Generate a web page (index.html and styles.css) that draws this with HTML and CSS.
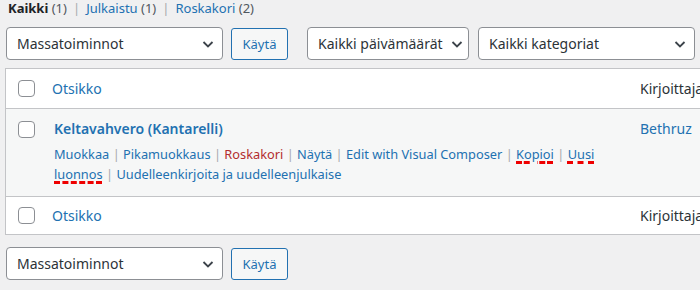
FILE: index.html
```html
<!DOCTYPE html>
<html lang="fi">
<head>
<meta charset="utf-8">
<link rel="stylesheet" href="styles.css">
</head>
<body>
<div class="page">
  <ul class="subsubsub">
    <li><span class="current">Kaikki</span> <span class="count">(1)</span></li>
    <li class="sep">|</li>
    <li><a href="#">Julkaistu <span class="count">(1)</span></a></li>
    <li class="sep">|</li>
    <li><a href="#">Roskakori <span class="count">(2)</span></a></li>
  </ul>

  <div class="tablenav top">
    <div class="select bulk"><span>Massatoiminnot</span><svg class="chev" width="14" height="14" viewBox="0 0 14 14"><path d="M2.5 5 L7 9.5 L11.5 5" fill="none" stroke="#3c434a" stroke-width="1.8"/></svg></div>
    <button class="button">Käytä</button>
    <div class="select dates"><span>Kaikki päivämäärät</span><svg class="chev" width="14" height="14" viewBox="0 0 14 14"><path d="M2.5 5 L7 9.5 L11.5 5" fill="none" stroke="#3c434a" stroke-width="1.8"/></svg></div>
    <div class="select cats"><span>Kaikki kategoriat</span><svg class="chev" width="14" height="14" viewBox="0 0 14 14"><path d="M2.5 5 L7 9.5 L11.5 5" fill="none" stroke="#3c434a" stroke-width="1.8"/></svg></div>
  </div>

  <div class="table">
    <div class="row head">
      <div class="cb"><span class="checkbox"></span></div>
      <div class="title"><a href="#">Otsikko</a></div>
      <div class="author">Kirjoittaja</div>
    </div>
    <div class="row post">
      <div class="cb"><span class="checkbox"></span></div>
      <div class="title">
        <a href="#" class="post-title">Keltavahvero (Kantarelli)</a>
        <div class="actions"><a href="#">Muokkaa</a> <span class="s">|</span> <a href="#">Pikamuokkaus</a> <span class="s">|</span> <a href="#" class="trash">Roskakori</a> <span class="s">|</span> <a href="#">Näytä</a> <span class="s">|</span> <a href="#">Edit with Visual Composer</a> <span class="s">|</span> <a href="#"><span class="sp">Kopioi</span></a> <span class="s">|</span> <a href="#"><span class="sp">Uusi</span> <span class="sp">luonnos</span></a> <span class="s">|</span> <a href="#">Uudelleenkirjoita ja uudelleenjulkaise</a></div>
      </div>
      <div class="author"><a href="#">Bethruz</a></div>
    </div>
    <div class="row foot">
      <div class="cb"><span class="checkbox"></span></div>
      <div class="title"><a href="#">Otsikko</a></div>
      <div class="author">Kirjoittaja</div>
    </div>
  </div>

  <div class="tablenav bottom">
    <div class="select bulk"><span>Massatoiminnot</span><svg class="chev" width="14" height="14" viewBox="0 0 14 14"><path d="M2.5 5 L7 9.5 L11.5 5" fill="none" stroke="#3c434a" stroke-width="1.8"/></svg></div>
    <button class="button">Käytä</button>
  </div>
</div>
</body>
</html>
```
FILE: styles.css
```css
* { box-sizing: border-box; }
html, body { margin: 0; padding: 0; }
body {
  background: #f0f0f1;
  font-family: "Noto Sans", "Open Sans", sans-serif;
  color: #3c434a;
  font-size: 13px;
  width: 700px;
  height: 290px;
  overflow: hidden;
}
a { color: #2271b1; text-decoration: none; }
.page { padding: 0; }

.subsubsub {
  list-style: none;
  margin: 0;
  padding: 0 0 0 8px;
  display: flex;
  gap: 6px;
  height: 19px;
  line-height: 17px;
  font-size: 13px;
}
.subsubsub .current { color: #1d2327; font-weight: 700; }
.subsubsub .count { color: #50575e; }
.subsubsub a .count { color: #50575e; }
.subsubsub .sep { color: #a7aaad; }

.tablenav {
  display: flex;
  align-items: center;
  padding-left: 6px;
  height: 33px;
  margin-top: 8px;
}
.select {
  height: 33px;
  background: #fff;
  border: 1px solid #8c8f94;
  border-radius: 4px;
  display: flex;
  align-items: center;
  justify-content: space-between;
  padding: 0 7px 0 10px;
  font-size: 14px;
  color: #2c3338;
}
.select.bulk { width: 217px; }
.select.dates { width: 162px; margin-left: 19px; padding-right: 4px; }
.select.cats { width: 217px; margin-left: 9px; }
.chev { flex: none; }
.button {
  height: 32px;
  margin-left: 8px;
  width: 57px;
  border: 1px solid #2271b1;
  border-radius: 3px;
  background: #f6f7f7;
  color: #2271b1;
  font-family: inherit;
  font-size: 13px;
  padding: 0;
}

.table {
  margin: 8px 0 0 5px;
  width: 710px;
  border: 1px solid #c3c4c7;
  background: #fff;
}
.row {
  display: grid;
  grid-template-columns: 46px 588px 1fr;
}
.row.head { height: 40px; border-bottom: 1px solid #c3c4c7; align-items: center; }
.row.foot { height: 38px; border-top: 1px solid #c3c4c7; align-items: center; }
.row.post { height: 87px; background: #f6f7f7; }
.cb { padding-left: 12px; display: flex; }
.checkbox {
  width: 17px;
  height: 17px;
  border: 1px solid #8c8f94;
  border-radius: 4px;
  background: #fff;
}
.row.head .title, .row.foot .title { font-size: 14px; }
.author { font-size: 14px; color: #2c3338; white-space: nowrap; }
.row.post .cb { padding-top: 12px; }
.row.post .title { padding: 10px 12px 0 2px; }
.row.post .author { padding-top: 10px; }
.post-title { font-weight: 600; font-size: 14px; display: block; line-height: 20px; }
.actions { margin-top: 5px; font-size: 12.8px; line-height: 20px; }
.actions .s { color: #a7aaad; }
.actions .trash { color: #b32d2e; }
.sp {
  text-decoration: underline dashed #e00;
  text-decoration-thickness: 3px;
  text-underline-offset: 2px;
}
.tablenav.bottom { margin-top: 12px; }
```
